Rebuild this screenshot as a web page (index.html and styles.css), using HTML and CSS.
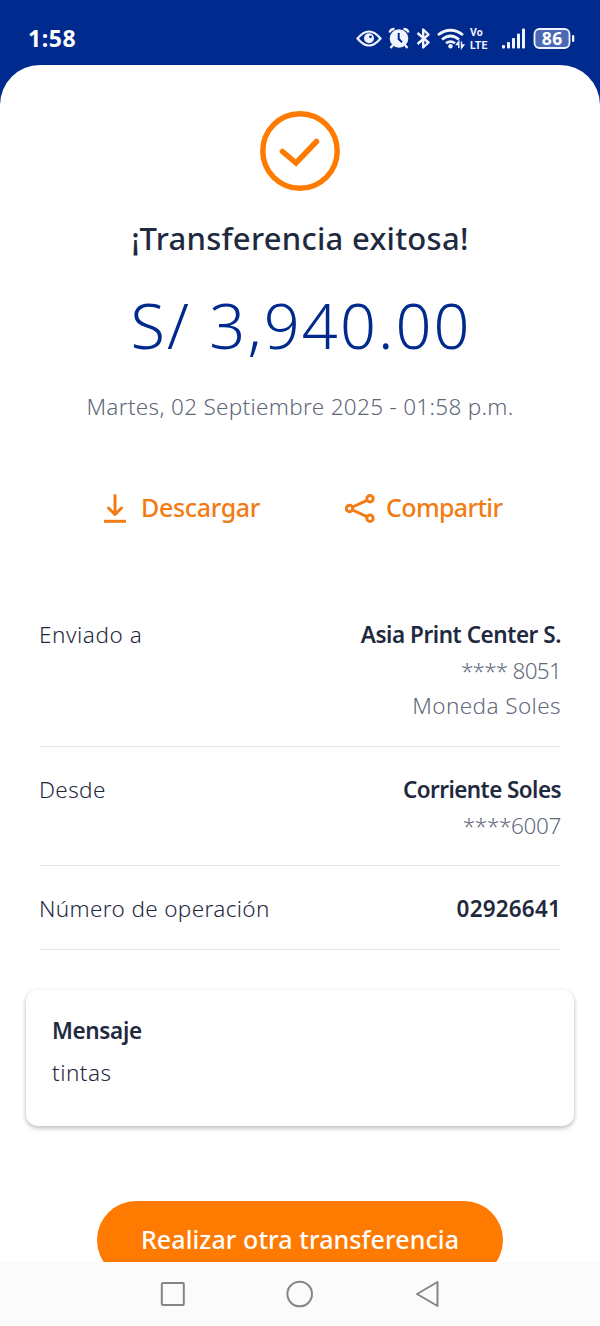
FILE: index.html
```html
<!DOCTYPE html>
<html lang="es">
<head>
<meta charset="utf-8">
<title>Transferencia exitosa</title>
<link rel="stylesheet" href="styles.css">
</head>
<body>
<header class="status">
  <span class="time">1:58</span>
  <svg class="status-icons" width="220" height="30" viewBox="0 0 220 30" fill="none" stroke="#f0f4ff" stroke-width="2">
    <path d="M1.500 15.500Q13 1.500 24.500 15.500Q13 29.500 1.500 15.500Z" stroke-width="2.200"/>
    <circle cx="13" cy="15.300" r="5" fill="#f0f4ff" stroke="none"/>
    <circle cx="14.500" cy="13.800" r="1.400" fill="#002a8d" stroke="none"/>
    <circle cx="43" cy="15.500" r="9.300" fill="#f0f4ff" stroke="none"/>
    <path d="M33.500 9.500Q34.500 6 38.500 6M47.500 6Q51.500 6 52.500 9.500M37 22l-2.500 3M49 22l2.500 3" stroke-width="2.300"/>
    <path d="M42.700 10v6l3.300 3.300" stroke="#002a8d"/>
    <path d="M61.500 10l11 9.500-5.300 5V6.500l5.300 5L61.500 21" stroke-width="2.400" stroke-linejoin="round"/>
    <path d="M82 12Q94.500 2.500 107 12M86 16.500Q94.500 9.500 103 16.500M90 20.300Q94.500 16.800 99 20.300" stroke-width="2.700"/>
    <circle cx="94.500" cy="23.200" r="2.200" fill="#f0f4ff" stroke="none"/>
    <path d="M102.800 25v-6.500l-2.300 3h2M105.500 18.500V25l2.300-3h-2" stroke-width="1.400"/>
    <g fill="#f0f4ff" stroke="none">
      <rect x="146" y="22" width="3" height="3.500" rx="1"/>
      <rect x="151" y="19" width="3" height="6.500" rx="1"/>
      <rect x="156" y="15" width="3" height="10.500" rx="1"/>
      <rect x="161" y="10.500" width="3" height="15" rx="1"/>
      <rect x="166" y="5.500" width="3" height="20" rx="1"/>
      <rect x="216" y="12" width="2.300" height="7" rx="1"/>
      <text class="volte" x="114" y="13">Vo</text>
      <text class="volte" x="114" y="25.500">LTE</text>
    </g>
    <rect x="178.500" y="6" width="35" height="19" rx="5" fill="#4a69b4" stroke-width="1.800"/>
    <text class="charge" x="196.300" y="21.700" text-anchor="middle" fill="#fff" stroke="none">86</text>
  </svg>
</header>
<main class="sheet">
  <svg class="check" width="80" height="80" viewBox="0 0 80 80" fill="none" stroke="#ff7a00">
    <circle cx="40" cy="40" r="37.200" stroke-width="5.400"/>
    <path d="M22.500 40.500L36 52 56.500 30.500" stroke-width="5.500" stroke-linecap="round"/>
  </svg>
  <h1 class="title">¡Transferencia exitosa!</h1>
  <p class="amount">S/ 3,940.00</p>
  <p class="date">Martes, 02 Septiembre 2025 - 01:58 p.m.</p>
  <div class="actions">
    <a class="action">
      <svg width="24" height="34" viewBox="0 0 24 34" fill="none" stroke="#f27c14" stroke-width="3" stroke-linecap="round" stroke-linejoin="round"><path d="M12 6.500V25M5.500 19l6.500 6.500 6.500-6.500"/><path d="M1 32.300h22" stroke-linecap="butt"/></svg>
      <span class="download-label">Descargar</span>
    </a>
    <a class="action share">
      <svg width="30" height="36" viewBox="0 0 30 36" fill="none" stroke="#f27c14" stroke-width="3"><circle cx="4.500" cy="19.500" r="3.200"/><circle cx="25" cy="9.800" r="3.200"/><circle cx="25" cy="29.200" r="3.200"/><path d="M7.500 18L22 11.300M7.500 21L22 27.700"/></svg>
      <span class="share-label">Compartir</span>
    </a>
  </div>
  <section class="details">
    <div class="row to">
      <span class="label">Enviado a</span>
      <div class="value"><b class="recipient">Asia Print Center S.</b><span class="account">**** 8051</span><span class="currency">Moneda Soles</span></div>
    </div>
    <div class="row from">
      <span class="label">Desde</span>
      <div class="value"><b class="source">Corriente Soles</b><span class="source-account">****6007</span></div>
    </div>
    <div class="row number">
      <span class="label">Número de operación</span>
      <div class="value"><b class="operation">02926641</b></div>
    </div>
  </section>
  <section class="message">
    <b>Mensaje</b>
    <span>tintas</span>
  </section>
  <button class="again">Realizar otra transferencia</button>
</main>
<nav class="nav">
  <svg width="280" height="30" viewBox="0 0 280 30" fill="none" stroke="#858585" stroke-width="2" stroke-linejoin="round">
    <rect x="1.800" y="4" width="22" height="22" rx="1"/><circle cx="139.700" cy="15" r="12.300"/><path d="M277.500 3v24L257 15Z"/>
  </svg>
</nav>
</body>
</html>
```
FILE: styles.css
```css
* { box-sizing: border-box; }
body {
  margin: 0;
  width: 600px;
  height: 1326px;
  overflow: hidden;
  background: #002a8d;
  color: #1f2a3f;
  font-family: "Noto Sans", sans-serif;
  display: flex;
  flex-direction: column;
}
h1, p { margin: 0; }
.status {
  flex: none;
  height: 65px;
  padding: 23px 24px 0 28px;
  display: flex;
  justify-content: space-between;
  color: #fff;
}
.time { font-size: 23px; line-height: 31px; font-weight: 700; letter-spacing: .6px; }
.volte { font: 700 10.500px Roboto, sans-serif; letter-spacing: .2px; }
.charge { font-size: 17.500px; font-weight: 700; letter-spacing: .5px; }
.sheet {
  flex: none;
  height: 1197px;
  overflow: hidden;
  background: #fff;
  border-radius: 40px 40px 0 0;
  padding-top: 46px;
  display: flex;
  flex-direction: column;
  align-items: center;
  white-space: nowrap;
}
.check, .title, .amount, .date, .actions, .details, .message, .again { flex: none; }
.title { margin-top: 27px; font-size: 31px; line-height: 40px; font-weight: 500; letter-spacing: .28px; }
.amount {
  margin: 27px -2px 0 0;
  font-size: 63px;
  line-height: 80px;
  font-weight: 300;
  letter-spacing: 2.100px;
  color: #002a8d;
}
.date {
  margin-top: 26px;
  font-size: 22.500px;
  line-height: 32px;
  font-weight: 300;
  letter-spacing: .31px;
  color: #5f687b;
}
.actions {
  width: 600px;
  margin-top: 66px;
  padding-left: 103px;
  display: flex;
  gap: 85px;
  font-size: 25px;
  line-height: 36px;
  font-weight: 500;
  color: #f27c14;
}
.action { display: flex; gap: 14px; }
.share { gap: 11px; }
.download-label { letter-spacing: -.33px; }
.share-label { letter-spacing: -.65px; }
.details { width: 522px; margin-top: 67px; }
.row {
  display: flex;
  justify-content: space-between;
  padding-top: 25px;
  border-bottom: 1.500px solid #e4e6e9;
  font-size: 22.500px;
  line-height: 35.500px;
  font-weight: 300;
}
.to { height: 155px; }
.from { height: 119px; }
.number { height: 84px; }
.label { letter-spacing: .36px; }
.to .label { letter-spacing: .55px; }
.value { display: flex; flex-direction: column; align-items: flex-end; color: #636b7d; }
.value b, .message b { font-weight: 600; color: #1f2a3f; }
.value .recipient { letter-spacing: -.45px; }
.account { letter-spacing: -.75px; }
.currency { letter-spacing: .4px; }
.value .source { letter-spacing: -.58px; }
.source-account { letter-spacing: -.35px; }
.value .operation { letter-spacing: .18px; }
.message {
  width: 548px;
  height: 136px;
  margin-top: 40px;
  padding: 20px 26px;
  border-radius: 12px;
  box-shadow: 0 2px 5px rgba(0, 0, 0, .28);
  display: flex;
  flex-direction: column;
  align-items: flex-start;
  font-size: 22.500px;
  line-height: 42px;
  font-weight: 300;
  letter-spacing: .5px;
}
.message b { letter-spacing: -.35px; }
.again {
  width: 406px;
  height: 78px;
  margin-top: 75px;
  padding: 0 0 2px;
  border: 0;
  border-radius: 39px;
  background: #ff7a00;
  color: #fff;
  font: 500 25px/76px "Noto Sans", sans-serif;
  letter-spacing: .1px;
}
.nav {
  flex: none;
  height: 64px;
  padding-top: 17px;
  background: #fbfbfb;
  display: flex;
  justify-content: center;
}
```
